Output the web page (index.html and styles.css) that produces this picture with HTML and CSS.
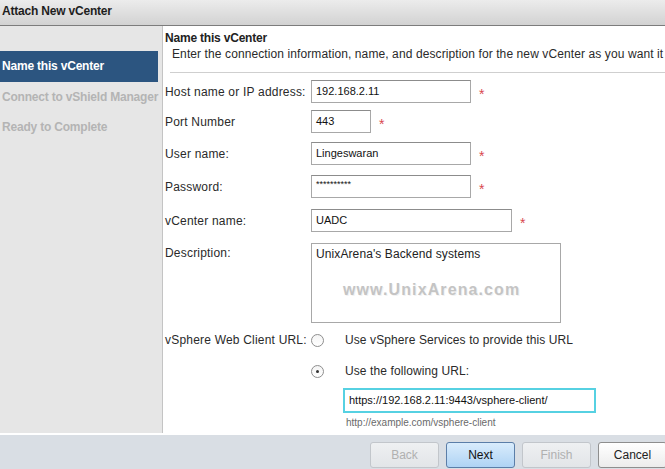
FILE: index.html
```html
<!DOCTYPE html>
<html lang="en">
<head>
  <meta charset="UTF-8">
  <title>Attach New vCenter</title>
  <link rel="stylesheet" href="styles.css">
</head>
<body>
  <div class="dialog">
    <div class="titlebar">Attach New vCenter</div>

    <div class="main">
      <ul class="steps">
        <li class="step active">Name this vCenter</li>
        <li class="step">Connect to vShield Manager</li>
        <li class="step">Ready to Complete</li>
      </ul>

      <div class="content">
        <div class="page-title">Name this vCenter</div>
        <div class="page-desc">Enter the connection information, name, and description for the new vCenter as you want it</div>
        <div class="divider"></div>

        <div class="form">
          <div class="row r-host">
            <label class="lbl">Host name or IP address:</label>
            <div class="field"><span class="input w-lg">192.168.2.11</span><span class="req">*</span></div>
          </div>
          <div class="row r-port">
            <label class="lbl">Port Number</label>
            <div class="field"><span class="input w-sm">443</span><span class="req">*</span></div>
          </div>
          <div class="row r-user">
            <label class="lbl">User name:</label>
            <div class="field"><span class="input w-lg">Lingeswaran</span><span class="req">*</span></div>
          </div>
          <div class="row r-pass">
            <label class="lbl">Password:</label>
            <div class="field"><span class="input w-lg pwd">**********</span><span class="req">*</span></div>
          </div>
          <div class="row r-name">
            <label class="lbl">vCenter name:</label>
            <div class="field"><span class="input w-xl">UADC</span><span class="req">*</span></div>
          </div>
          <div class="row r-desc">
            <label class="lbl">Description:</label>
            <div class="field">
              <div class="textarea">
                <span>UnixArena's Backend systems</span>
                <span class="watermark">www.UnixArena.com</span>
              </div>
            </div>
          </div>
          <div class="row r-radio1">
            <label class="lbl">vSphere Web Client URL:</label>
            <div class="field"><span class="radio"></span><span class="radio-text">Use vSphere Services to provide this URL</span></div>
          </div>
          <div class="row r-radio2">
            <span class="lbl"></span>
            <div class="field"><span class="radio checked"></span><span class="radio-text">Use the following URL:</span></div>
          </div>
          <div class="row r-url">
            <span class="lbl"></span>
            <div class="field"><span class="url-input">https://192.168.2.11:9443/vsphere-client/</span></div>
          </div>
          <div class="row r-hint">
            <span class="lbl"></span>
            <div class="field hint">http://example.com/vsphere-client</div>
          </div>
        </div>
      </div>
    </div>

    <div class="footer">
      <button class="btn disabled">Back</button>
      <button class="btn primary">Next</button>
      <button class="btn disabled">Finish</button>
      <button class="btn">Cancel</button>
    </div>
  </div>
</body>
</html>
```

FILE: styles.css
```css
* {
  margin: 0;
  padding: 0;
  box-sizing: border-box;
}

body {
  font-family: 'Liberation Sans', Arial, sans-serif;
  font-size: 12px;
  color: #222;
  background: #fff;
  width: 665px;
  height: 469px;
  overflow: hidden;
}

.dialog {
  display: flex;
  flex-direction: column;
  height: 469px;
}

/* title bar */
.titlebar {
  height: 26px;
  padding: 4px 2px 0;
  font-weight: bold;
  font-size: 12px;
  color: #1e1e1e;
  background: linear-gradient(#ececec, #d2d2d2);
  border-bottom: 1px solid #7c7c7c;
  letter-spacing: -0.2px;
}

.main {
  display: flex;
  height: 407px;
}

/* wizard steps */
.steps {
  list-style: none;
  width: 163px;
  flex: none;
  background: #e6e6e6;
  border-right: 1px solid #c4c4c4;
  padding: 25px 4px 0 0;
}

.step {
  height: 30px;
  line-height: 30px;
  padding-left: 2px;
  font-weight: bold;
  color: #b4b4b4;
  letter-spacing: -0.2px;
  white-space: nowrap;
}

.step.active {
  height: 31px;
  line-height: 31px;
  background: #2c5580;
  color: #fff;
}

/* right content */
.content {
  flex: 1;
  padding-left: 2px;
  overflow: hidden;
}

.page-title {
  margin-top: 5px;
  line-height: 15px;
  font-weight: bold;
  letter-spacing: -0.2px;
}

.page-desc {
  padding-left: 7px;
  line-height: 16px;
  white-space: nowrap;
  color: #2a2a2a;
  letter-spacing: 0.1px;
}

.divider {
  margin: 10px 0 0 5px;
  height: 1px;
  background: #cfcfcf;
}

.form {
  padding-top: 7px;
}

.row {
  display: flex;
  align-items: center;
}

.lbl {
  width: 146px;
  flex: none;
  color: #2a2a2a;
  white-space: nowrap;
  letter-spacing: 0.2px;
}

.field {
  display: flex;
  align-items: center;
}

.input {
  display: block;
  height: 23px;
  line-height: 21px;
  padding: 0 4px;
  border: 1px solid #a8a8a8;
  border-top-color: #8c8c8c;
  background: #fff;
  font-size: 11px;
  color: #111;
}

.input.pwd {
  font-size: 9px;
  line-height: 17px;
}

.w-lg { width: 160px; }
.w-sm { width: 60px; }
.w-xl { width: 201px; }

.req {
  margin-left: 8px;
  color: #d8484e;
  font-size: 14px;
  line-height: 12px;
  padding-top: 4px;
}

.r-port { margin-top: 7px; }
.r-user { margin-top: 9px; }
.r-pass { margin-top: 10px; }
.r-name { margin-top: 11px; }
.r-desc { margin-top: 11px; align-items: flex-start; }
.r-desc .lbl { padding-top: 3px; }

.textarea {
  position: relative;
  width: 250px;
  height: 80px;
  border: 1px solid #a8a8a8;
  padding: 3px 4px;
  color: #222;
  letter-spacing: 0.1px;
}

.watermark {
  position: absolute;
  left: 31px;
  top: 37px;
  font-size: 16px;
  font-weight: bold;
  color: #c4c4c4;
  letter-spacing: 1.1px;
  text-shadow: 1px 1px 0 #f2f2f2;
}

.r-radio1 { margin-top: 7px; height: 20px; }
.r-radio2 { margin-top: 11px; height: 20px; }

.radio {
  width: 13px;
  height: 13px;
  border-radius: 50%;
  border: 1px solid #8e8e8e;
  background: linear-gradient(#f4f4f4, #ffffff);
  display: flex;
  align-items: center;
  justify-content: center;
}

.radio.checked::after {
  content: '';
  width: 3px;
  height: 3px;
  border-radius: 50%;
  background: #333;
}

.radio-text {
  margin-left: 21px;
  color: #2a2a2a;
  letter-spacing: 0.1px;
}

.r-url { margin-top: 7px; }

.url-input {
  display: block;
  margin-left: 32px;
  width: 253px;
  height: 25px;
  line-height: 21px;
  padding: 0 4px;
  border: 2px solid #56d1e2;
  font-size: 11px;
  color: #111;
}

.r-hint { margin-top: 3px; }

.hint {
  margin-left: 35px;
  font-size: 10px;
  color: #6a6a6a;
  line-height: 14px;
}

/* footer */
.footer {
  height: 36px;
  background: #d9dee4;
  border-top: 2px solid #fff;
  display: flex;
  justify-content: flex-end;
  align-items: flex-start;
  gap: 7px;
  padding-top: 7px;
  margin-right: -2px;
}

.btn {
  width: 69px;
  height: 26px;
  font-family: 'Liberation Sans', Arial, sans-serif;
  font-size: 12px;
  color: #222;
  border: 1px solid #8e8e8e;
  border-radius: 3px;
  background: linear-gradient(#ffffff, #ececec);
}

.btn.disabled {
  color: #b0b0b0;
  border-color: #c2c6cb;
  background: linear-gradient(#eef0f2, #e2e5e8);
}

.btn.primary {
  border-color: #5b7ea8;
  background: linear-gradient(#d9ecfc, #afd3f4);
  color: #111;
}
```
